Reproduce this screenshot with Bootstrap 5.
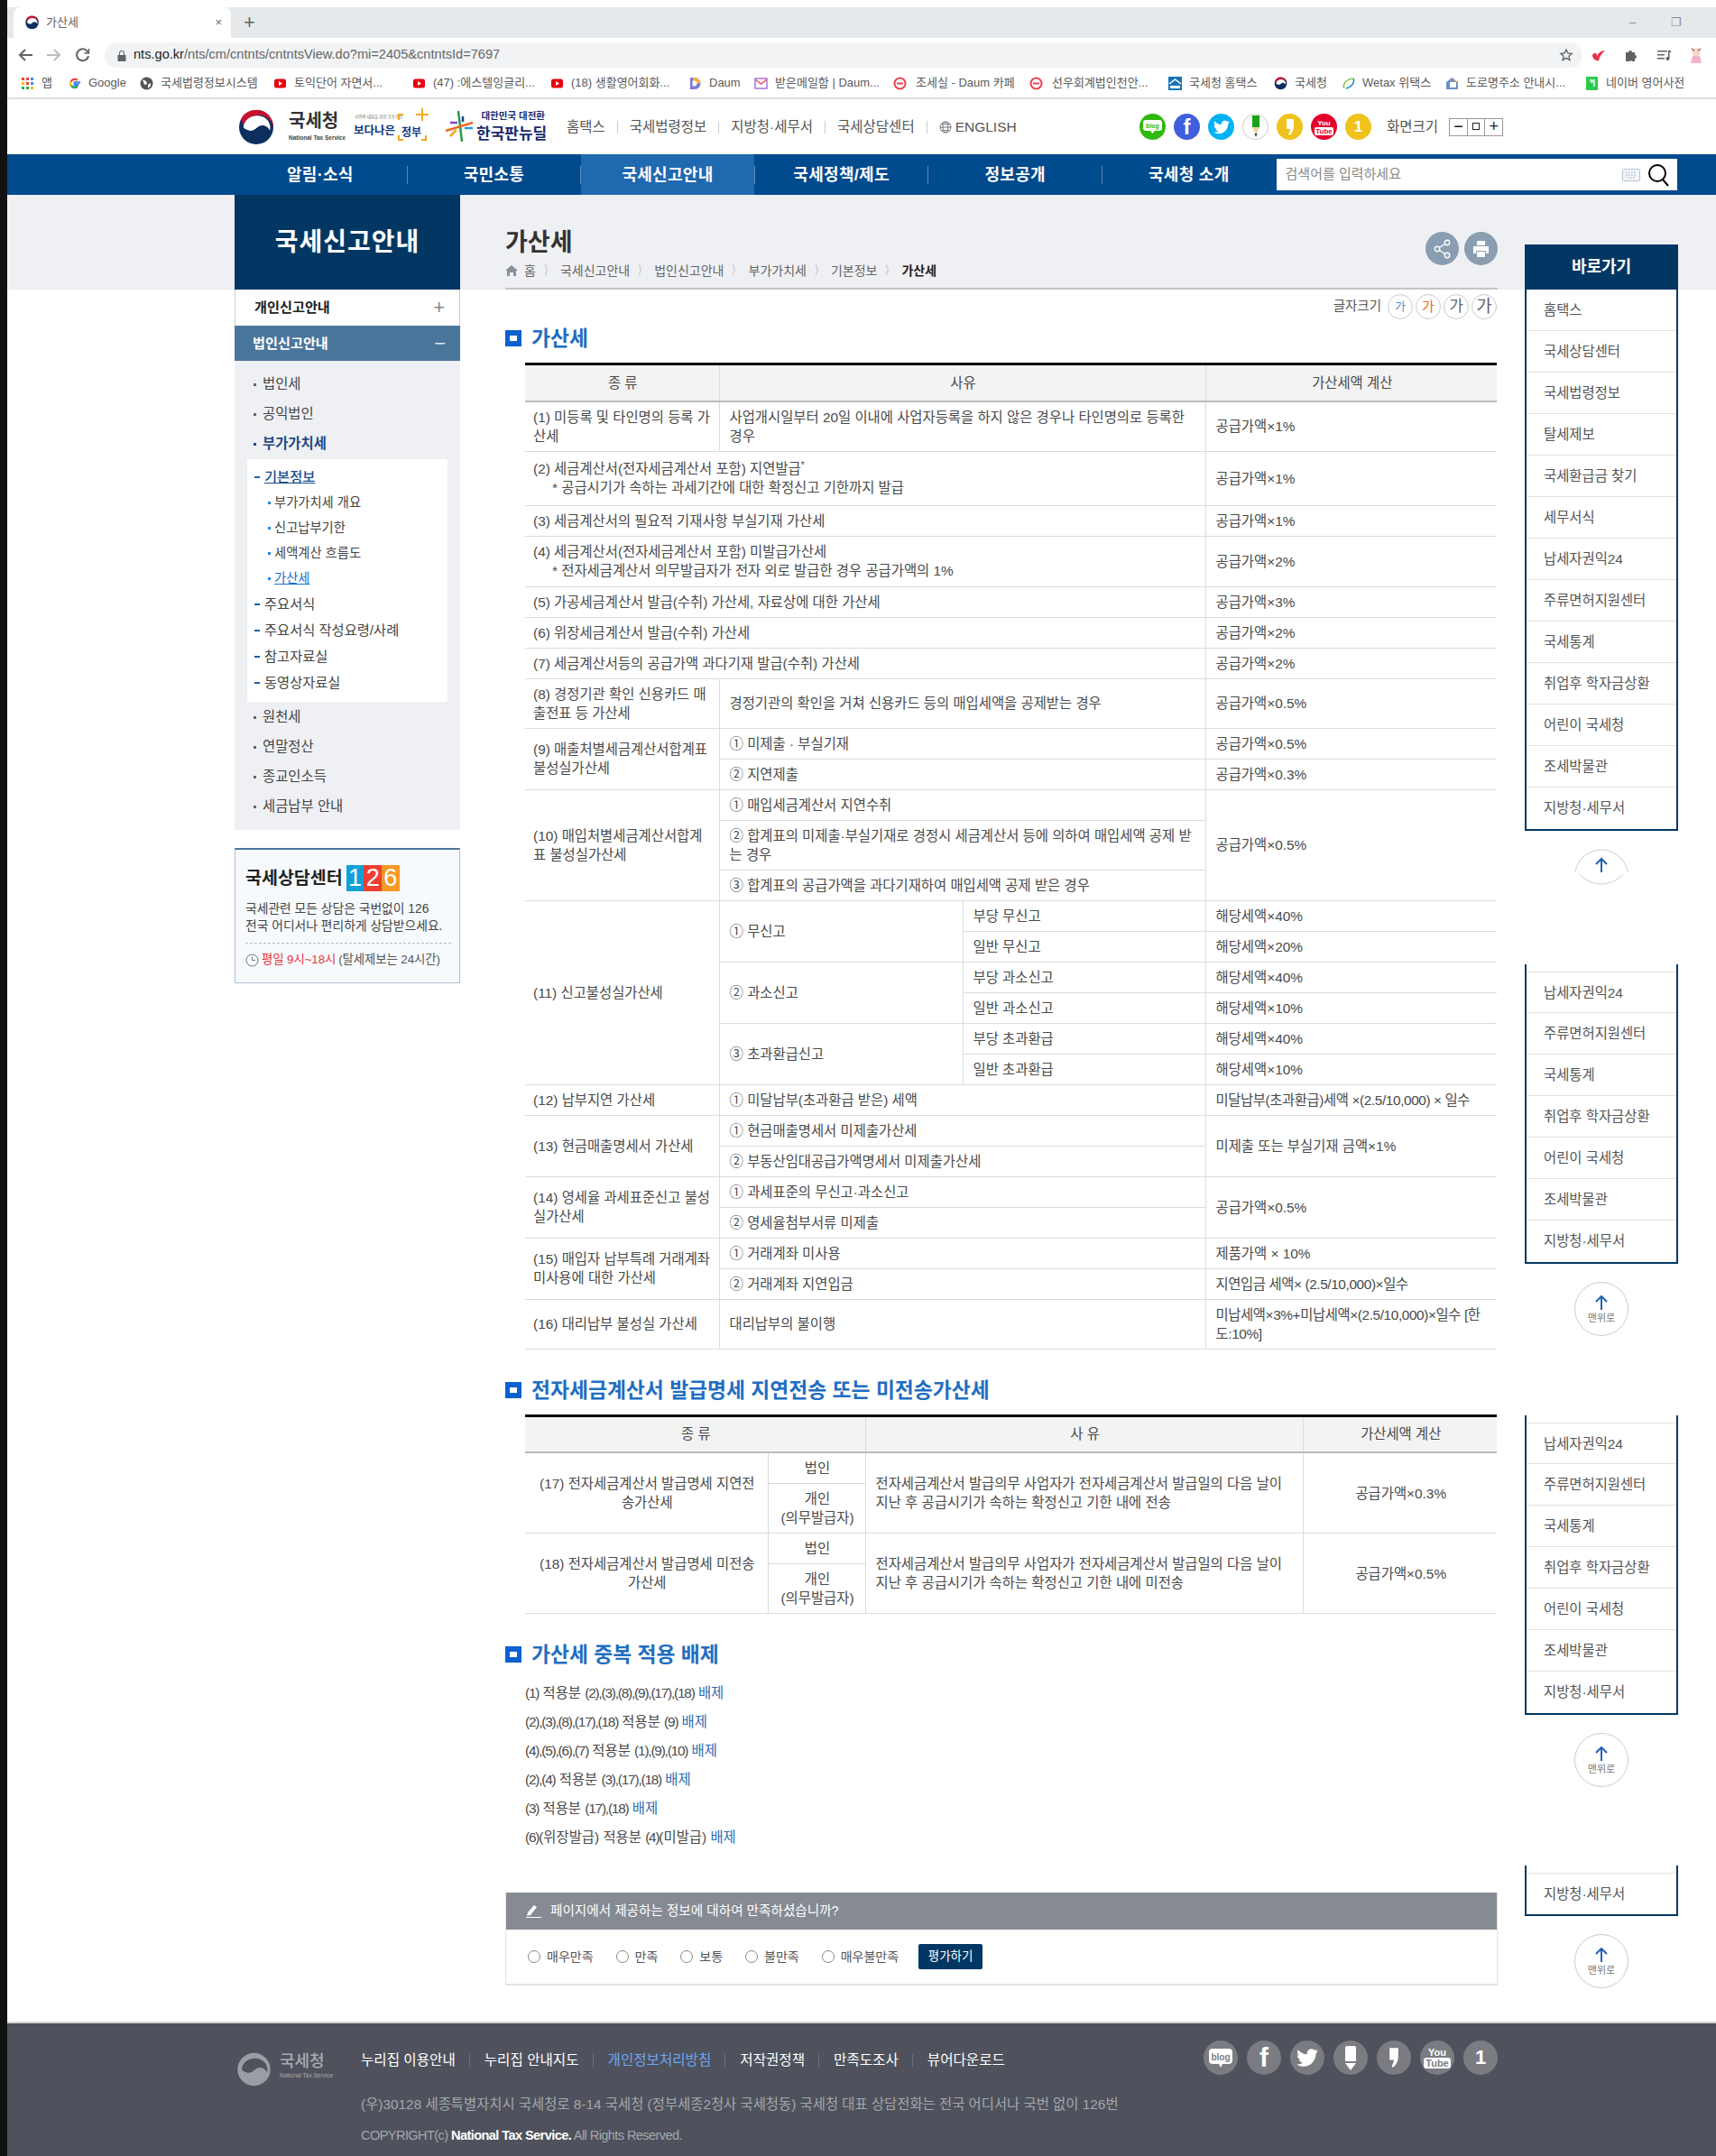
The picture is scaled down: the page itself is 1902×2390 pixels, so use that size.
<!DOCTYPE html>
<html lang="ko">
<head>
<meta charset="utf-8">
<title>가산세</title>
<link href="https://cdn.jsdelivr.net/npm/bootstrap@5.3.0/dist/css/bootstrap.min.css" rel="stylesheet">
<style>
html,body{margin:0;padding:0;background:#fff}
body{font-family:"Liberation Sans","Noto Sans CJK KR",sans-serif;font-size:15px;color:#4a4a4a;width:1902px;height:2390px;overflow:hidden}
a{color:inherit;text-decoration:none}
.blk-strip{width:8px;background:#111;flex:none}
.pg{width:1894px;flex:none}
.top-gap{height:8px}
.tabs-bar{height:34px;background:#e6e9ec;align-items:flex-end}
.tab-on{width:241px;height:34px;margin-left:7px;background:#fff;border-radius:8px 8px 0 0;padding:0 10px 0 13px;font-size:13px;color:#666}
.tab-plus{margin-left:14px;font-size:22px;color:#666;line-height:1}
.win-ctl{margin-left:auto;color:#888;font-size:13px;gap:28px;width:96px;height:34px}
.tool-bar{height:34px;align-items:center;padding-top:4px}
.nav-glyph{width:32px;text-align:center;font-size:19px;color:#5f6368;line-height:1;display:flex;justify-content:center;align-items:center}
.url-box{width:1638px;height:28px;margin-left:8px;background:#f1f3f4;border-radius:14px;padding:0 10px 0 14px;font-size:14.6px;color:#666}
.url-box b{font-weight:400;color:#222}
.tool-ico{width:36px;text-align:center}
.mark-bar{height:34px;border-bottom:2px solid #dedfe0;font-size:13px;color:#5a5a5a;padding-left:15px;white-space:nowrap;overflow:hidden}
.bmk{flex:none;gap:8px}
.bmk-c{gap:10px}
.bmk:nth-child(1){width:52px}.bmk:nth-child(2){width:80px}.bmk:nth-child(3){width:148px}.bmk:nth-child(4){width:154px}.bmk:nth-child(5){width:153px}.bmk:nth-child(6){width:153px}.bmk:nth-child(7){width:73px}.bmk:nth-child(8){width:154px}.bmk:nth-child(9){width:151px}.bmk:nth-child(10){width:154px}.bmk:nth-child(11){width:117px}.bmk:nth-child(12){width:75px}.bmk:nth-child(13){width:115px}.bmk:nth-child(14){width:155px}
.bm-ic{width:15px;height:15px;flex:none;display:block}

.site-head{height:61px;padding-left:257px;background:#fff}
.brand-txt{width:66px;margin-left:17px;line-height:1;color:#333}
.brand-txt strong{display:block;font-size:20px;font-weight:700;color:#333}
.brand-txt small{display:block;font-size:6.5px;margin-top:6px;white-space:nowrap;color:#444;font-weight:700}
.gov-a{margin-left:6px}.gov-b{margin-left:15px}
.top-links{margin-left:23px;font-size:15.5px;color:#555;width:585px;white-space:nowrap}
.top-links a{padding-right:13px;margin-right:13px;border-right:1px solid #ccc;line-height:14px}
.top-links a:last-child{border:0;padding:0;margin:0}
.sns-row{gap:9px;margin-left:50px}
.sns-ic{width:29px;height:29px;border-radius:50%;color:#fff;font-weight:700;line-height:1;flex:none;text-align:center;overflow:hidden}
.snsf{font-size:24px;font-family:"Liberation Sans",sans-serif}
.sns1{font-size:17px}
.yt-a{font-size:8px;line-height:9px}
.yt-b{font-size:8px;line-height:9px;background:#fff;color:#e4002b;border-radius:2px;padding:0 1px}
.c-blog{background:#2fb90e}.c-fb{background:#3f5fdc}.c-tw{background:#00b2f5}.c-pen{background:#fff;border:1px solid #ccc}.c-st{background:#f0c21c}.c-yt{background:#e4002b}
.zoom-lbl{margin-left:17px;font-size:15.5px;color:#555;white-space:nowrap}
.zoom-box{margin-left:12px;border:1px solid #999;height:20px;width:60px;flex:none}
.zoom-box span{flex:1;border-right:1px solid #999;font-size:18px;line-height:17px;text-align:center;color:#222}
.zoom-box span:last-child{border:0}
.zm-sq{display:block;width:8px;height:8px;border:1px solid #222;margin:4px auto 0}

.gnb{height:45px;background:#004a8e;padding-left:251px}
.gnb-item{width:191.6px;height:45px;color:#fff;font-size:18px;font-weight:700;text-align:center;line-height:47px;letter-spacing:.3px}
.gnb-on{background:#1f69b0}
.gnb-sepwrap{height:20px;width:1px;background:#5b8ab8;flex:none}
.srch{width:444px;height:35px;margin-left:1px;background:#fff;padding:0 8px 0 10px;font-size:15px;color:#8a8a8a}

.body-wrap{background:linear-gradient(#eff0f4 105px,#fff 105px);padding-left:252px;height:2025px;align-items:flex-start}
.lnb{width:250px;flex:none}
.lnb-title{height:105px;background:#033763;color:#fff;font-size:28px;font-weight:700;letter-spacing:1px;text-align:center;line-height:105px}
.lnb-top{height:40px;padding:0 16px 0 21px;border:1px solid #ccc;border-width:0 1px;font-size:15.2px;font-weight:700;color:#222;background:#fff;line-height:1}
.lnb-act{height:39px;background:#4b769c;color:#fff;padding:0 16px 0 20px;font-size:15.2px;font-weight:700;line-height:1}
.lnb-sign{font-size:22px;font-weight:400;color:#888;line-height:1}
.lnb-act .lnb-sign{color:#dfe6ee}
.lnb-sub{background:#eff0f4;padding:9px 0 10px;font-size:15.4px;color:#444}
.l1{display:block;height:33px;line-height:33px;padding-left:31px;position:relative}
.l1::before{content:"";position:absolute;left:21px;top:16px;width:3px;height:3px;background:#666}
.l1-on{font-weight:700;color:#1f4b85}
.l1-on::before{background:#1f4b85}
.sub-box{background:#fff;margin:1px 14px 0;padding:5px 0 7px;height:269px;font-size:15.3px}
.l2{display:block;height:29px;line-height:29px;padding-left:19px;position:relative}
.l2::before{content:"";position:absolute;left:8px;top:14px;width:6px;height:2px;background:#1a5fa8}
.l2-on{color:#1a4e8f;font-weight:500}
.l2-on span{text-decoration:underline}
.l3{display:block;height:28px;line-height:28px;padding-left:30px;font-size:14.3px;position:relative}
.l3::before{content:"";position:absolute;left:23px;top:13px;width:3px;height:3px;background:#1e88e5}
.l3-on{color:#1a6fd0}
.l3-on span{text-decoration:underline}
.cs-box{margin-top:20px;height:150px;border:1px solid #a9bdd0;border-top:2px solid #4b769c;background:#f7fafd;padding:16px 9px 0 11px}
.cs-title{font-size:19.5px;font-weight:700;color:#222;line-height:30px;white-space:nowrap}
.logo126{display:flex;margin-left:4px;height:29px;width:59px;font-size:27px;font-weight:400;color:#fff;line-height:29px;text-align:center;flex:none}
.logo126 i{font-style:normal;flex:1}
.l-b{background:#0ea1d8}.l-r{background:#ee3e33}.l-o{background:#f59a23}
.cs-txt{font-size:13.8px;line-height:19px;margin-top:10px;color:#444;white-space:nowrap}
.cs-time{margin-top:9px;border-top:1px dashed #b8b8b8;padding-top:8px;font-size:13.4px;white-space:nowrap;color:#555;gap:3px;letter-spacing:-.1px}
.cs-time em{font-style:normal;color:#e8343d}

.cont{width:1100px;margin-left:50px;flex:none}
.title-block{height:105px;border-bottom:2px solid #c3c5cb;padding-top:35px}
.pg-title{font-size:27px;font-weight:700;color:#333;line-height:36px;margin:0}
.crumb{font-size:14px;line-height:20px;color:#666;margin-top:3px;gap:7px}
.crumb i{font-style:normal;color:#aaa;font-size:13px;transform:scaleX(.6)}
.crumb b{color:#222}
.act-btns{gap:6px;margin-top:-53px;height:37px}
.act-round{width:37px;height:37px;border-radius:50%;background:#8b9db0}
.fs-row{height:28px;margin-top:5px;gap:3px;font-size:14.5px;color:#555;padding-right:1px}
.fs-c{width:28px;height:28px;border:1px solid #ccc;border-radius:50%;text-align:center;color:#666;line-height:25px}
.fs1{font-size:13px;color:#4f90c8}.fs2{font-size:15px;color:#ef6a1a}.fs3{font-size:17px}.fs4{font-size:19px}
.sec-h{height:30px;font-size:22.8px;font-weight:700;color:#1f6ec2;gap:11px;line-height:30px;margin:6px 0 12px}
.sec-sq{width:18px;height:18px;border:solid #0a62d0;border-width:6px 5px;flex:none;background:#fff}
.sec-2{margin-top:30px}
.tx-tbl{width:1077px;margin:0 0 0 22px;table-layout:fixed;border-collapse:collapse;border-top:3px solid #000;color:#4a4a4a;font-size:15.4px;line-height:21px;--bs-table-bg:transparent;--bs-table-color:#4a4a4a}
.tx-tbl>*>tr>*{padding:6px 9px 6px 11px;border:1px solid #dcdcdc;vertical-align:middle;font-weight:400;box-shadow:none}
.tx-tbl>*>tr>*:first-child{border-left:0}
.tx-tbl>*>tr>*:last-child{border-right:0}
.tx-tbl>tbody>tr>td.fc,.tx-tbl>tbody>tr>td[colspan="3"]{padding-left:9px}
.tx-tbl thead th{background:#f3f3f3;text-align:center;height:41px;border-top:0;border-bottom:2px solid #bbb}
.tx-tbl td p{margin:0}
.tx-tbl .star{padding-left:21px}
.h60{height:60px}.h56{height:56px}
.tc{text-align:center}
.nrw{letter-spacing:-.4px}
.brk{word-break:break-all}
.tx-tbl sup{font-size:10px;top:-.6em}
.c215{width:215px}.c270{width:270px}.c269{width:269px}.c323{width:323px}
.c269b{width:269px}.c108{width:108px}.c485{width:485px}.c215b{width:215px}
.excl{margin:9px 0 0 22px;padding:0;list-style:none;font-size:15.4px;line-height:32px;color:#4a4a4a}
.excl i{font-style:normal;letter-spacing:-1.2px}
.excl b{font-weight:400;color:#2c6bb3}
.survey{margin-top:45px;height:103px;border:1px solid #e3e3e3;border-top:0;border-bottom-width:2px}
.svy-head{height:41px;background:#868a93;color:#fff;font-size:14.6px;padding-left:22px;gap:10px}
.svy-body{height:60px;padding-left:24px;font-size:14px;color:#555}
.svy-opt{gap:7px;margin-right:25px;white-space:nowrap}
.svy-opt .form-check-input{width:14px;height:14px;margin:0;border-color:#888;flex:none}
.svy-btn{--bs-btn-padding-y:0;--bs-btn-padding-x:0;width:71px;height:28px;background:#033763;color:#fff;font-size:13.5px;border:0;border-radius:2px;margin-left:-3px;flex:none}

.rail{width:170px;margin-left:30px;flex:none;padding-top:55px}
.qk-head{height:50px;background:#033763;color:#fff;font-size:18px;font-weight:700;text-align:center;line-height:50px}
.qk-box{border:solid #033763;border-width:0 2px 2px;background:#fff}
.qk-box .list-group-item{height:46px;line-height:46px;padding:0 0 0 19px;font-size:15.4px;color:#555;border-color:#e2e2e2;background:#fff;white-space:nowrap}
.qk-box .list-group-item:last-child{border-bottom:0}
.qk-pad{padding-top:8px}
.qk-pad .list-group-item:first-child{border-top:1px solid #e2e2e2}
.up-btn{width:60px;height:60px;border:1px solid #ccc;border-radius:50%;margin:20px auto 0;text-align:center;color:#777;font-size:11px;line-height:1;background:#fff}
.up-first{border:0;height:40px;margin-top:20px;display:block}
.rail-g2{margin-top:88px}
.rail-g3{margin-top:88px}
.rail-g4{margin-top:87px}

.foot{height:149px;background:#4f525c;border-top:2px solid #d4d4d4;padding-left:253px;color:#a4a7ae}
.ft-inner{width:1399px;padding-top:19px}
.ft-logo{width:139px;flex:none;padding-top:12px;gap:8px}
.ft-logo strong{display:block;font-size:18px;font-weight:500;color:#a9abb0;line-height:22px}
.ft-logo small{display:block;font-size:6.5px;color:#a9abb0;white-space:nowrap}
.ft-main{width:930px;flex:none}
.ft-links{font-size:15.6px;color:#fff;height:43px;white-space:nowrap}
.ft-links a{padding-right:15px;margin-right:16px;border-right:1px solid #6d7079;line-height:14px}
.ft-links a:last-child{border:0}
.ft-links .ft-on{color:#6ea6f5}
.ft-addr{font-size:15.4px;margin-top:18px;line-height:20px;white-space:nowrap}
.ft-copy{font-size:14.6px;margin-top:14px;line-height:20px;letter-spacing:-.6px}
.ft-copy b{color:#fff;font-weight:700}
.ft-sns{gap:10px;margin-left:auto;height:38px}
.ft-ic{width:38px;height:38px;border-radius:50%;background:#7a7c82;color:#fff;font-weight:700;line-height:1;text-align:center;flex:none}
.ftf{font-size:30px;font-family:"Liberation Sans",sans-serif}
.ft1{font-size:22px}
.fy-a{font-size:11px;line-height:12px}
.fy-b{font-size:11px;line-height:12px;background:#fff;color:#7a7c82;border-radius:3px;padding:0 2px}
</style>
</head>
<body class="d-flex">
<div class="blk-strip"></div>
<div class="pg">
  <div class="top-gap"></div>
  <div class="tabs-bar d-flex">
    <div class="tab-on d-flex align-items-center gap-2">
      <svg width="15" height="16" viewBox="0 0 40 44"><use href="#gov"/></svg>
      <span class="flex-grow-1">가산세</span><span>×</span>
    </div>
    <span class="tab-plus align-self-center">+</span>
    <div class="win-ctl d-flex align-items-center justify-content-between"><span>–</span><span>❐</span><span></span></div>
  </div>
  <div class="tool-bar d-flex">
    <span class="nav-glyph ms-1"><svg width="16" height="14" viewBox="0 0 16 14" fill="none" stroke="#5f6368" stroke-width="2"><path d="M16 7H2M8 1L2 7l6 6"/></svg></span>
    <span class="nav-glyph"><svg width="16" height="14" viewBox="0 0 16 14" fill="none" stroke="#b9bdc1" stroke-width="2"><path d="M0 7h14M8 1l6 6-6 6"/></svg></span>
    <span class="nav-glyph"><svg width="16" height="16" viewBox="0 0 16 16" fill="none" stroke="#5f6368" stroke-width="2"><path d="M13.500 5A6.500 6.500 0 1 0 14 9"/><path d="M14.500 1v5h-5" stroke-width="1.500"/></svg></span>
    <div class="url-box d-flex align-items-center gap-2">
      <svg width="10" height="13" viewBox="0 0 10 13"><path d="M2 6V4a3 3 0 0 1 6 0v2h1.500v7H.5V6zm1 0h4V4a2 2 0 0 0-4 0z" fill="#5f6368"/></svg>
      <span class="flex-grow-1"><b>nts.go.kr</b>/nts/cm/cntnts/cntntsView.do?mi=2405&amp;cntntsId=7697</span>
      <svg width="16" height="16" viewBox="0 0 24 24"><path d="M12 3l2.800 6 6.400.7-4.800 4.300 1.400 6.400L12 17l-5.800 3.400 1.400-6.400L2.800 9.700 9.200 9z" fill="none" stroke="#5f6368" stroke-width="2"/></svg>
    </div>
    <div class="d-flex align-items-center">
      <span class="tool-ico"><svg width="16" height="14" viewBox="0 0 16 14"><path d="M1 6c2-3 5-3 5 1 2-4 5-6 9-6-4 3-6 7-7 11-3 1-7-2-7-6z" fill="#e8334a"/></svg></span>
      <span class="tool-ico"><svg width="15" height="15" viewBox="0 0 15 15"><path d="M1 4h3a2 2 0 0 1 4 0h3v3a2 2 0 0 1 0 4v3H8a2 2 0 0 0-3 0H1z" fill="#5f6368"/></svg></span>
      <span class="tool-ico"><svg width="15" height="13" viewBox="0 0 15 13"><path d="M0 1h11v1.500H0zm0 4h8v1.500H0zm0 4h8v1.500H0zM12 1h3v2h-1.500v7a2 2 0 1 1-1.500-2z" fill="#5f6368"/></svg></span>
      <span class="tool-ico"><svg width="16" height="20" viewBox="0 0 16 20"><circle cx="8" cy="6" r="4.500" fill="#f5d5c8"/><path d="M3 2l3 2M13 2l-3 2" stroke="#b77" stroke-width="2"/><path d="M4 10h8l2 8H2z" fill="#f4b4c8"/></svg></span>
    </div>
  </div>
  <div class="mark-bar d-flex align-items-center">
    <div class="bmk d-flex align-items-center"><svg class="bm-ic" viewBox="0 0 15 15"><g fill="#ea4335"><rect x="1" y="1" width="3" height="3"/><rect x="6" y="1" width="3" height="3"/></g><rect x="11" y="1" width="3" height="3" fill="#4285f4"/><rect x="1" y="6" width="3" height="3" fill="#fbbc05"/><rect x="6" y="6" width="3" height="3" fill="#ea4335"/><rect x="11" y="6" width="3" height="3" fill="#4285f4"/><rect x="1" y="11" width="3" height="3" fill="#34a853"/><rect x="6" y="11" width="3" height="3" fill="#34a853"/><rect x="11" y="11" width="3" height="3" fill="#fbbc05"/></svg><span>앱</span></div>
    <div class="bmk d-flex align-items-center"><svg class="bm-ic" viewBox="0 0 16 16"><path d="M15 6.700H8.200v2.800H12a3.900 3.900 0 0 1-6.900 1.300" fill="none" stroke="#4285f4" stroke-width="2.400"/><path d="M4.200 10.800a5 5 0 0 1 0-5.600" fill="none" stroke="#fbbc05" stroke-width="2.400"/><path d="M4 5.500A5.200 5.200 0 0 1 11.600 4" fill="none" stroke="#ea4335" stroke-width="2.400"/><path d="M4 10.500a5 5 0 0 0 7.500 1.300" fill="none" stroke="#34a853" stroke-width="2.400"/></svg><span>Google</span></div>
    <div class="bmk d-flex align-items-center"><svg class="bm-ic" viewBox="0 0 15 15"><circle cx="7.500" cy="7.500" r="7" fill="#555"/><path d="M3 3l4 2 1 3-3 1zm6 6l3-2v3l-3 3z" fill="#fff"/></svg><span>국세법령정보시스템</span></div>
    <div class="bmk d-flex align-items-center"><svg class="bm-ic" viewBox="0 0 15 15"><use href="#yt"/></svg><span>토익단어 자면서...</span></div>
    <div class="bmk d-flex align-items-center"><svg class="bm-ic" viewBox="0 0 15 15"><use href="#yt"/></svg><span>(47) :에스텔잉글리...</span></div>
    <div class="bmk d-flex align-items-center"><svg class="bm-ic" viewBox="0 0 15 15"><use href="#yt"/></svg><span>(18) 생활영어회화...</span></div>
    <div class="bmk d-flex align-items-center"><svg class="bm-ic" viewBox="0 0 15 15"><path d="M2 1h5a6.500 6.500 0 0 1 0 13H2z" fill="#7b7bdc"/><path d="M5 1h2a6.500 6.500 0 0 1 6.500 6.500H5z" fill="#f3b23c"/><path d="M4.500 4.500h2a3 3 0 0 1 0 6h-2z" fill="#fff"/></svg><span>Daum</span></div>
    <div class="bmk d-flex align-items-center"><svg class="bm-ic" viewBox="0 0 15 15"><rect x="1" y="2" width="13" height="11" fill="#fff" stroke="#a974d8" stroke-width="1.500"/><path d="M1 3l6.500 5L14 3" fill="none" stroke="#e8536a" stroke-width="1.500"/></svg><span>받은메일함 | Daum...</span></div>
    <div class="bmk bmk-c d-flex align-items-center"><svg class="bm-ic" viewBox="0 0 15 15"><use href="#cafe"/></svg><span>조세실 - Daum 카페</span></div>
    <div class="bmk bmk-c d-flex align-items-center"><svg class="bm-ic" viewBox="0 0 15 15"><use href="#cafe"/></svg><span>선우회계법인천안...</span></div>
    <div class="bmk d-flex align-items-center"><svg class="bm-ic" viewBox="0 0 15 15"><rect width="15" height="15" fill="#1674b8"/><path d="M1 8l6.500-5L14 8" fill="none" stroke="#fff" stroke-width="1.500"/><rect x="2" y="10" width="11" height="3" fill="#fff"/></svg><span>국세청 홈택스</span></div>
    <div class="bmk d-flex align-items-center"><svg class="bm-ic" viewBox="0 0 40 44"><use href="#gov"/></svg><span>국세청</span></div>
    <div class="bmk d-flex align-items-center"><svg class="bm-ic" viewBox="0 0 15 15"><path d="M3 13C1 9 4 3 13 2" fill="none" stroke="#8ac640" stroke-width="1.500"/><path d="M13 2c2 4-2 10-8 11" fill="none" stroke="#1e88c9" stroke-width="1.500"/></svg><span>Wetax 위택스</span></div>
    <div class="bmk d-flex align-items-center"><svg class="bm-ic" viewBox="0 0 15 15"><path d="M1 6l6.500-5L14 6v8H1z" fill="#6a8fd0"/><rect x="5" y="6" width="7" height="6" fill="#fff"/><path d="M7 1.500L14 6h-3z" fill="#f0a02c"/></svg><span>도로명주소 안내시...</span></div>
    <div class="bmk d-flex align-items-center"><svg class="bm-ic" viewBox="0 0 15 15"><rect x="1" width="13" height="15" fill="#2dc94f"/><path d="M5 4h3v2H6m4-3v8" stroke="#fff" fill="none" stroke-width="1.400"/></svg><span>네이버 영어사전</span></div>
  </div>

  <header class="site-head d-flex align-items-center">
    <svg width="38" height="44" viewBox="0 0 40 44"><use href="#gov"/></svg>
    <div class="brand-txt"><strong>국세청</strong><small>National Tax Service</small></div>
    <svg class="gov-a" width="84" height="44" viewBox="0 0 84 44"><text x="1" y="12" font-size="4.500" fill="#666" font-family="Noto Sans CJK KR">국민의 내일을 위한 등동혁신</text><text x="0" y="30" font-size="12.500" font-weight="700" fill="#12387d" font-family="Noto Sans CJK KR">보다나은</text><text x="53" y="32" font-size="12" font-weight="700" fill="#12387d" font-family="Noto Sans CJK KR">정부</text><path d="M55 8h-5v6M50 31v5h5M75 36h5v-5" fill="none" stroke="#f0a91e" stroke-width="2"/><path d="M76 1v14M69 8h14" stroke="#f0a91e" stroke-width="2"/></svg>
    <svg class="gov-b" width="114" height="44" viewBox="0 0 114 44"><path d="M17 4l4 34" stroke="#2a9d4e" stroke-width="2.500"/><path d="M3 26l30-9" stroke="#f0671f" stroke-width="2.500"/><path d="M8 17h8" stroke="#7b4ec6" stroke-width="2.500"/><path d="M8 32l7-7" stroke="#f0a91e" stroke-width="2.500"/><path d="M24 23h9" stroke="#1f9ed8" stroke-width="2.500"/><path d="M22 10v6" stroke="#1d3f95" stroke-width="2.500"/><text x="113" y="13" text-anchor="end" font-size="10.500" font-weight="700" fill="#1a2a6c" font-family="Noto Sans CJK KR">대한민국 대전환</text><text x="37" y="35" font-size="17" font-weight="700" fill="#1a2a6c" font-family="Noto Sans CJK KR">한국판뉴딜</text></svg>
    <div class="top-links d-flex align-items-center">
      <a href="#">홈택스</a><a href="#">국세법령정보</a><a href="#">지방청·세무서</a><a href="#">국세상담센터</a>
      <a href="#" class="d-flex align-items-center gap-1"><svg width="14" height="14" viewBox="0 0 14 14" fill="none" stroke="#777"><circle cx="7" cy="7" r="6"/><ellipse cx="7" cy="7" rx="3" ry="6"/><path d="M1 7h12M2 3.500h10M2 10.500h10"/></svg>ENGLISH</a>
    </div>
    <div class="sns-row d-flex align-items-center">
      <span class="sns-ic c-blog d-flex align-items-center justify-content-center"><svg width="21" height="15" viewBox="0 0 21 15"><path d="M3 0h15a3 3 0 0 1 3 3v6a3 3 0 0 1-3 3h-5l-2.500 3L8 12H3a3 3 0 0 1-3-3V3a3 3 0 0 1 3-3z" fill="#fff"/><text x="10.500" y="8.500" text-anchor="middle" font-size="7" font-weight="700" fill="#2fb90e" font-family="Liberation Sans">blog</text></svg></span>
      <span class="sns-ic c-fb d-flex align-items-center justify-content-center"><span class="snsf">f</span></span>
      <span class="sns-ic c-tw d-flex align-items-center justify-content-center"><svg width="18" height="18" viewBox="0 0 24 24"><use href="#bird"/></svg></span>
      <span class="sns-ic c-pen d-flex align-items-center justify-content-center"><svg width="14" height="26" viewBox="0 0 14 26"><path d="M3 0h8v13H3z" fill="#19a319"/><path d="M3 13h8l-4 10z" fill="#e8d9a8"/><path d="M5.500 20h3L7 24z" fill="#333"/></svg></span>
      <span class="sns-ic c-st d-flex align-items-center justify-content-center"><svg width="10" height="18" viewBox="0 0 10 18"><path d="M1 0h8v8c0 4-2 8-5 10l-1-1c1-2 2-4 2-6H1z" fill="#fff"/></svg></span>
      <span class="sns-ic c-yt d-flex align-items-center justify-content-center flex-column"><span class="yt-a">You</span><span class="yt-b">Tube</span></span>
      <span class="sns-ic c-st d-flex align-items-center justify-content-center"><span class="sns1">1</span></span>
    </div>
    <span class="zoom-lbl">화면크기</span>
    <div class="zoom-box d-flex"><span>−</span><span><i class="zm-sq"></i></span><span>+</span></div>
  </header>

  <nav class="gnb d-flex align-items-center">
    <a class="gnb-item" href="#">알림·소식</a><span class="gnb-sepwrap"></span>
    <a class="gnb-item" href="#">국민소통</a><span class="gnb-sepwrap"></span>
    <a class="gnb-item gnb-on" href="#">국세신고안내</a><span class="gnb-sepwrap"></span>
    <a class="gnb-item" href="#">국세정책/제도</a><span class="gnb-sepwrap"></span>
    <a class="gnb-item" href="#">정보공개</a><span class="gnb-sepwrap"></span>
    <a class="gnb-item" href="#">국세청 소개</a>
    <div class="srch d-flex align-items-center justify-content-between">
      <span>검색어를 입력하세요</span>
      <span class="d-flex align-items-center gap-2">
        <svg width="20" height="14" viewBox="0 0 20 14"><rect x=".5" y=".5" width="19" height="13" rx="1" fill="#f2f5f8" stroke="#b6c3d2"/><path d="M4 4h12M4 7h12M6 10h8" stroke="#9aa8b8" stroke-dasharray="1.500 1.500"/></svg>
        <svg width="25" height="26" viewBox="0 0 25 26" fill="none" stroke="#000" stroke-width="2"><circle cx="11" cy="11" r="9"/><path d="M17 18l6 7"/></svg>
      </span>
    </div>
  </nav>

  <div class="body-wrap d-flex">
    <aside class="lnb">
      <div class="lnb-title">국세신고안내</div>
      <a href="#" class="lnb-top d-flex align-items-center justify-content-between"><span>개인신고안내</span><span class="lnb-sign">+</span></a>
      <a href="#" class="lnb-act d-flex align-items-center justify-content-between"><span>법인신고안내</span><span class="lnb-sign">−</span></a>
      <div class="lnb-sub">
        <a class="l1" href="#">법인세</a>
        <a class="l1" href="#">공익법인</a>
        <a class="l1 l1-on" href="#">부가가치세</a>
        <div class="sub-box">
          <a class="l2 l2-on" href="#"><span>기본정보</span></a>
          <a class="l3" href="#">부가가치세 개요</a>
          <a class="l3" href="#">신고납부기한</a>
          <a class="l3" href="#">세액계산 흐름도</a>
          <a class="l3 l3-on" href="#"><span>가산세</span></a>
          <a class="l2" href="#">주요서식</a>
          <a class="l2" href="#">주요서식 작성요령/사례</a>
          <a class="l2" href="#">참고자료실</a>
          <a class="l2" href="#">동영상자료실</a>
        </div>
        <a class="l1" href="#">원천세</a>
        <a class="l1" href="#">연말정산</a>
        <a class="l1" href="#">종교인소득</a>
        <a class="l1" href="#">세금납부 안내</a>
      </div>
      <div class="cs-box">
        <div class="cs-title d-flex align-items-center">국세상담센터<span class="logo126"><i class="l-b">1</i><i class="l-r">2</i><i class="l-o">6</i></span></div>
        <div class="cs-txt">국세관련 모든 상담은 국번없이 126<br>전국 어디서나 편리하게 상담받으세요.</div>
        <div class="cs-time d-flex align-items-center"><svg width="15" height="15" viewBox="0 0 15 15" fill="none" stroke="#777"><circle cx="7.500" cy="7.500" r="6.500"/><path d="M7.500 3.500v4h3.500"/></svg><em>평일 9시~18시</em><span>(탈세제보는 24시간)</span></div>
      </div>
    </aside>

    <main class="cont">
      <div class="title-block">
        <h1 class="pg-title">가산세</h1>
        <div class="crumb d-flex align-items-center">
          <svg width="14" height="12" viewBox="0 0 14 12"><path d="M7 0l7 6h-2v6H9V8H5v4H2V6H0z" fill="#8a8f98"/></svg><span>홈</span><i>〉</i><span>국세신고안내</span><i>〉</i><span>법인신고안내</span><i>〉</i><span>부가가치세</span><i>〉</i><span>기본정보</span><i>〉</i><b>가산세</b>
        </div>
        <div class="act-btns d-flex justify-content-end">
          <span class="act-round d-flex align-items-center justify-content-center"><svg width="20" height="22" viewBox="0 0 20 22" fill="none" stroke="#fff" stroke-width="1.400"><circle cx="15" cy="4" r="2.700"/><circle cx="4" cy="11" r="2.700"/><circle cx="15" cy="18" r="2.700"/><path d="M6.500 9.500l6-4M6.500 12.500l6 4"/></svg></span>
          <span class="act-round d-flex align-items-center justify-content-center"><svg width="19" height="18" viewBox="0 0 19 18"><path d="M5 0h9v5H5zM1 6h17v8h-3v-3H4v3H1zM5 12h9v6H5z" fill="#fff"/></svg></span>
        </div>
      </div>
      <div class="fs-row d-flex align-items-center justify-content-end">
        <span class="me-1">글자크기</span>
        <span class="fs-c fs1">가</span><span class="fs-c fs2">가</span><span class="fs-c fs3">가</span><span class="fs-c fs4">가</span>
      </div>
      <h2 class="sec-h d-flex align-items-center"><span class="sec-sq"></span>가산세</h2>
      <table class="table tx-tbl">
        <colgroup><col class="c215"><col class="c270"><col class="c269"><col class="c323"></colgroup>
        <thead><tr><th>종 류</th><th colspan="2">사유</th><th>가산세액 계산</th></tr></thead>
        <tbody>
          <tr><td class="fc">(1) 미등록 및 타인명의 등록 가산세</td><td colspan="2">사업개시일부터 20일 이내에 사업자등록을 하지 않은 경우나 타인명의로 등록한 경우</td><td>공급가액×1%</td></tr>
          <tr class="h60"><td colspan="3"><p>(2) 세금계산서(전자세금계산서 포함) 지연발급<sup>*</sup></p><p class="star">* 공급시기가 속하는 과세기간에 대한 확정신고 기한까지 발급</p></td><td>공급가액×1%</td></tr>
          <tr><td colspan="3">(3) 세금계산서의 필요적 기재사항 부실기재 가산세</td><td>공급가액×1%</td></tr>
          <tr class="h56"><td colspan="3"><p>(4) 세금계산서(전자세금계산서 포함) 미발급가산세</p><p class="star">* 전자세금계산서 의무발급자가 전자 외로 발급한 경우 공급가액의 1%</p></td><td>공급가액×2%</td></tr>
          <tr><td colspan="3">(5) 가공세금계산서 발급(수취) 가산세, 자료상에 대한 가산세</td><td>공급가액×3%</td></tr>
          <tr><td colspan="3">(6) 위장세금계산서 발급(수취) 가산세</td><td>공급가액×2%</td></tr>
          <tr><td colspan="3">(7) 세금계산서등의 공급가액 과다기재 발급(수취) 가산세</td><td>공급가액×2%</td></tr>
          <tr><td class="fc">(8) 경정기관 확인 신용카드 매출전표 등 가산세</td><td colspan="2">경정기관의 확인을 거쳐 신용카드 등의 매입세액을 공제받는 경우</td><td>공급가액×0.5%</td></tr>
          <tr><td class="fc" rowspan="2">(9) 매출처별세금계산서합계표 불성실가산세</td><td colspan="2">① 미제출 · 부실기재</td><td>공급가액×0.5%</td></tr>
          <tr><td colspan="2">② 지연제출</td><td>공급가액×0.3%</td></tr>
          <tr><td class="fc" rowspan="3">(10) 매입처별세금계산서합계표 불성실가산세</td><td colspan="2">① 매입세금계산서 지연수취</td><td rowspan="3">공급가액×0.5%</td></tr>
          <tr><td colspan="2">② 합계표의 미제출·부실기재로 경정시 세금계산서 등에 의하여 매입세액 공제 받는 경우</td></tr>
          <tr><td colspan="2">③ 합계표의 공급가액을 과다기재하여 매입세액 공제 받은 경우</td></tr>
          <tr><td class="fc" rowspan="6">(11) 신고불성실가산세</td><td rowspan="2">① 무신고</td><td>부당 무신고</td><td>해당세액×40%</td></tr>
          <tr><td>일반 무신고</td><td>해당세액×20%</td></tr>
          <tr><td rowspan="2">② 과소신고</td><td>부당 과소신고</td><td>해당세액×40%</td></tr>
          <tr><td>일반 과소신고</td><td>해당세액×10%</td></tr>
          <tr><td rowspan="2">③ 초과환급신고</td><td>부당 초과환급</td><td>해당세액×40%</td></tr>
          <tr><td>일반 초과환급</td><td>해당세액×10%</td></tr>
          <tr><td class="fc">(12) 납부지연 가산세</td><td colspan="2">① 미달납부(초과환급 받은) 세액</td><td class="nrw">미달납부(초과환급)세액 ×(2.5/10,000) × 일수</td></tr>
          <tr><td class="fc" rowspan="2">(13) 현금매출명세서 가산세</td><td colspan="2">① 현금매출명세서 미제출가산세</td><td rowspan="2">미제출 또는 부실기재 금액×1%</td></tr>
          <tr><td colspan="2">② 부동산임대공급가액명세서 미제출가산세</td></tr>
          <tr><td class="fc" rowspan="2">(14) 영세율 과세표준신고 불성실가산세</td><td colspan="2">① 과세표준의 무신고·과소신고</td><td rowspan="2">공급가액×0.5%</td></tr>
          <tr><td colspan="2">② 영세율첨부서류 미제출</td></tr>
          <tr><td class="fc" rowspan="2">(15) 매입자 납부특례 거래계좌 미사용에 대한 가산세</td><td colspan="2">① 거래계좌 미사용</td><td>제품가액 × 10%</td></tr>
          <tr><td colspan="2">② 거래계좌 지연입금</td><td class="nrw">지연입금 세액× (2.5/10,000)×일수</td></tr>
          <tr><td class="fc">(16) 대리납부 불성실 가산세</td><td colspan="2">대리납부의 불이행</td><td class="nrw brk">미납세액×3%+미납세액×(2.5/10,000)×일수 [한도:10%]</td></tr>
        </tbody>
      </table>
      <h2 class="sec-h sec-2 d-flex align-items-center"><span class="sec-sq"></span>전자세금계산서 발급명세 지연전송 또는 미전송가산세</h2>
      <table class="table tx-tbl">
        <colgroup><col class="c269b"><col class="c108"><col class="c485"><col class="c215b"></colgroup>
        <thead><tr><th colspan="2">종 류</th><th>사 유</th><th>가산세액 계산</th></tr></thead>
        <tbody>
          <tr><td rowspan="2" class="tc">(17) 전자세금계산서 발급명세 지연전송가산세</td><td class="tc">법인</td><td rowspan="2">전자세금계산서 발급의무 사업자가 전자세금계산서 발급일의 다음 날이 지난 후 공급시기가 속하는 확정신고 기한 내에 전송</td><td rowspan="2" class="tc">공급가액×0.3%</td></tr>
          <tr><td class="tc">개인<br>(의무발급자)</td></tr>
          <tr><td rowspan="2" class="tc">(18) 전자세금계산서 발급명세 미전송가산세</td><td class="tc">법인</td><td rowspan="2">전자세금계산서 발급의무 사업자가 전자세금계산서 발급일의 다음 날이 지난 후 공급시기가 속하는 확정신고 기한 내에 미전송</td><td rowspan="2" class="tc">공급가액×0.5%</td></tr>
          <tr><td class="tc">개인<br>(의무발급자)</td></tr>
        </tbody>
      </table>
      <h2 class="sec-h sec-2 d-flex align-items-center"><span class="sec-sq"></span>가산세 중복 적용 배제</h2>
      <ul class="excl">
        <li><i>(1)</i> 적용분 <i>(2),(3),(8),(9),(17),(18)</i> <b>배제</b></li>
        <li><i>(2),(3),(8),(17),(18)</i> 적용분 <i>(9)</i> <b>배제</b></li>
        <li><i>(4),(5),(6),(7)</i> 적용분 <i>(1),(9),(10)</i> <b>배제</b></li>
        <li><i>(2),(4)</i> 적용분 <i>(3),(17),(18)</i> <b>배제</b></li>
        <li><i>(3)</i> 적용분 <i>(17),(18)</i> <b>배제</b></li>
        <li><i>(6)</i>(위장발급) 적용분 <i>(4)</i>(미발급) <b>배제</b></li>
      </ul>
      <section class="survey">
        <div class="svy-head d-flex align-items-center"><svg width="17" height="14" viewBox="0 0 17 14"><path d="M9 0l3 2-7 9-4 1 1-4zM0 13h17v1H0z" fill="#fff"/></svg><span>페이지에서 제공하는 정보에 대하여 만족하셨습니까?</span></div>
        <div class="svy-body d-flex align-items-center">
          <label class="svy-opt d-flex align-items-center"><input class="form-check-input" type="radio" name="svy">매우만족</label>
          <label class="svy-opt d-flex align-items-center"><input class="form-check-input" type="radio" name="svy">만족</label>
          <label class="svy-opt d-flex align-items-center"><input class="form-check-input" type="radio" name="svy">보통</label>
          <label class="svy-opt d-flex align-items-center"><input class="form-check-input" type="radio" name="svy">불만족</label>
          <label class="svy-opt d-flex align-items-center"><input class="form-check-input" type="radio" name="svy">매우불만족</label>
          <button class="btn svy-btn" type="button">평가하기</button>
        </div>
      </section>
    </main>

    <aside class="rail">
      <div class="qk-head">바로가기</div>
      <div class="qk-box list-group list-group-flush">
        <a class="list-group-item" href="#">홈택스</a><a class="list-group-item" href="#">국세상담센터</a><a class="list-group-item" href="#">국세법령정보</a><a class="list-group-item" href="#">탈세제보</a><a class="list-group-item" href="#">국세환급금 찾기</a><a class="list-group-item" href="#">세무서식</a><a class="list-group-item" href="#">납세자권익24</a><a class="list-group-item" href="#">주류면허지원센터</a><a class="list-group-item" href="#">국세통계</a><a class="list-group-item" href="#">취업후 학자금상환</a><a class="list-group-item" href="#">어린이 국세청</a><a class="list-group-item" href="#">조세박물관</a><a class="list-group-item" href="#">지방청·세무서</a>
      </div>
      <svg class="up-first mx-auto" width="60" height="40" viewBox="0 0 60 40" fill="none"><path d="M1 26C3 10 18 1 30 1s27 9 29 25M6 28c6 7 16 11 24 11s18-4 24-11" stroke="#ccc"/><path d="M30 26V12M24 17l6-6 6 6" stroke="#2462b5" stroke-width="2"/></svg>

      <div class="rail-g2 qk-box qk-pad list-group list-group-flush">
        <a class="list-group-item" href="#">납세자권익24</a><a class="list-group-item" href="#">주류면허지원센터</a><a class="list-group-item" href="#">국세통계</a><a class="list-group-item" href="#">취업후 학자금상환</a><a class="list-group-item" href="#">어린이 국세청</a><a class="list-group-item" href="#">조세박물관</a><a class="list-group-item" href="#">지방청·세무서</a>
      </div>
      <div class="up-btn d-flex flex-column align-items-center justify-content-center"><svg width="14" height="16" viewBox="0 0 14 16" fill="none" stroke="#2462b5" stroke-width="2"><path d="M7 16V2M1 7l6-6 6 6"/></svg><span class="mt-1">맨위로</span></div>

      <div class="rail-g3 qk-box qk-pad list-group list-group-flush">
        <a class="list-group-item" href="#">납세자권익24</a><a class="list-group-item" href="#">주류면허지원센터</a><a class="list-group-item" href="#">국세통계</a><a class="list-group-item" href="#">취업후 학자금상환</a><a class="list-group-item" href="#">어린이 국세청</a><a class="list-group-item" href="#">조세박물관</a><a class="list-group-item" href="#">지방청·세무서</a>
      </div>
      <div class="up-btn d-flex flex-column align-items-center justify-content-center"><svg width="14" height="16" viewBox="0 0 14 16" fill="none" stroke="#2462b5" stroke-width="2"><path d="M7 16V2M1 7l6-6 6 6"/></svg><span class="mt-1">맨위로</span></div>

      <div class="rail-g4 qk-box qk-pad list-group list-group-flush">
        <a class="list-group-item" href="#">지방청·세무서</a>
      </div>
      <div class="up-btn d-flex flex-column align-items-center justify-content-center"><svg width="14" height="16" viewBox="0 0 14 16" fill="none" stroke="#2462b5" stroke-width="2"><path d="M7 16V2M1 7l6-6 6 6"/></svg><span class="mt-1">맨위로</span></div>
    </aside>
  </div>

  <footer class="foot">
    <div class="ft-inner d-flex">
      <div class="ft-logo d-flex align-items-start">
        <svg width="41" height="40" viewBox="0 0 40 44"><use href="#govgray"/></svg>
        <div><strong>국세청</strong><small>National Tax Service</small></div>
      </div>
      <div class="ft-main">
        <div class="ft-links d-flex align-items-center"><a href="#">누리집 이용안내</a><a href="#">누리집 안내지도</a><a href="#" class="ft-on">개인정보처리방침</a><a href="#">저작권정책</a><a href="#">만족도조사</a><a href="#">뷰어다운로드</a></div>
        <div class="ft-addr">(우)30128 세종특별자치시 국세청로 8-14 국세청 (정부세종2청사 국세청동) 국세청 대표 상담전화는 전국 어디서나 국번 없이 126번</div>
        <div class="ft-copy">COPYRIGHT(c) <b>National Tax Service.</b> All Rights Reserved.</div>
      </div>
      <div class="ft-sns d-flex">
        <span class="ft-ic d-flex align-items-center justify-content-center"><svg width="26" height="21" viewBox="0 0 26 21"><path d="M4 0h18a4 4 0 0 1 4 4v9a4 4 0 0 1-4 4h-7l-2 4-2-4H4a4 4 0 0 1-4-4V4a4 4 0 0 1 4-4z" fill="#fff"/><text x="13" y="12.500" text-anchor="middle" font-size="10" font-weight="700" fill="#7a7c82" font-family="Liberation Sans">blog</text></svg></span>
        <span class="ft-ic d-flex align-items-center justify-content-center"><span class="ftf">f</span></span>
        <span class="ft-ic d-flex align-items-center justify-content-center"><svg width="24" height="24" viewBox="0 0 24 24"><use href="#bird"/></svg></span>
        <span class="ft-ic d-flex align-items-center justify-content-center"><svg width="12" height="27" viewBox="0 0 12 27"><path d="M2 0h8a2 2 0 0 1 2 2v15H0V2a2 2 0 0 1 2-2zM0 19h12l-6 8z" fill="#fff"/></svg></span>
        <span class="ft-ic d-flex align-items-center justify-content-center"><svg width="12" height="24" viewBox="0 0 10 18"><path d="M1 0h8v8c0 4-2 8-5 10l-1-1c1-2 2-4 2-6H1z" fill="#fff"/></svg></span>
        <span class="ft-ic d-flex align-items-center justify-content-center flex-column"><span class="fy-a">You</span><span class="fy-b">Tube</span></span>
        <span class="ft-ic d-flex align-items-center justify-content-center"><span class="ftf ft1">1</span></span>
      </div>
    </div>
  </footer>
</div>

<svg width="0" height="0" class="d-block position-absolute">
  <defs>
    <g id="gov"><circle cx="20" cy="22" r="20" fill="#0c2f60"/><path d="M2.500 12A20 20 0 0 1 40 22C38 13 30 7 21 8 13 9 7 13 5 20 4 17 3 14 2.500 12z" fill="#c8102e"/><path d="M5 22C6 13 14 8 22 8.500 32 9 38 17 36 26 34 21 28 18 23 21c-3 2-6 6-11 5-3-1-6-2-7-4z" fill="#fff"/><path d="M12 30c-1-1-1-1 0-1 4 1 8-2 11-5 4-3 9-2 10 2 0 6-6 10-12 10-4 0-8-3-9-6z" fill="#0c2f60"/></g>
    <g id="govgray"><circle cx="20" cy="22" r="20" fill="#9a9da3"/><path d="M5 22C6 13 14 8 22 8.500 32 9 38 17 36 26 34 21 28 18 23 21c-3 2-6 6-11 5-3-1-6-2-7-4z" fill="#4f525c"/></g>
    <g id="yt"><rect x="1" y="2.500" width="13" height="10" rx="2.500" fill="#e60012"/><path d="M6 5l4 2.500L6 10z" fill="#fff"/></g>
    <g id="cafe"><circle cx="7.500" cy="7.500" r="6" fill="#fff" stroke="#e8424f" stroke-width="2"/><rect x="4" y="6.500" width="7" height="2" fill="#e8424f"/></g>
    <path id="bird" fill="#fff" d="M23.950 4.570a10 10 0 0 1-2.820.78 4.960 4.960 0 0 0 2.160-2.720 9.900 9.900 0 0 1-3.130 1.190 4.920 4.920 0 0 0-8.380 4.480C7.690 8.100 4.070 6.130 1.640 3.160a4.820 4.820 0 0 0-.66 2.470 4.900 4.900 0 0 0 2.190 4.100 4.900 4.900 0 0 1-2.230-.62v.06a4.920 4.920 0 0 0 3.950 4.830 5 5 0 0 1-2.210.08 4.940 4.940 0 0 0 4.600 3.420A9.870 9.870 0 0 1 0 19.540a14 14 0 0 0 7.560 2.210c9.050 0 14-7.500 14-13.990 0-.21 0-.42-.02-.63a10 10 0 0 0 2.410-2.560z"/>
  </defs>
</svg>
<script src="https://cdn.jsdelivr.net/npm/bootstrap@5.3.0/dist/js/bootstrap.bundle.min.js"></script>
</body>
</html>
